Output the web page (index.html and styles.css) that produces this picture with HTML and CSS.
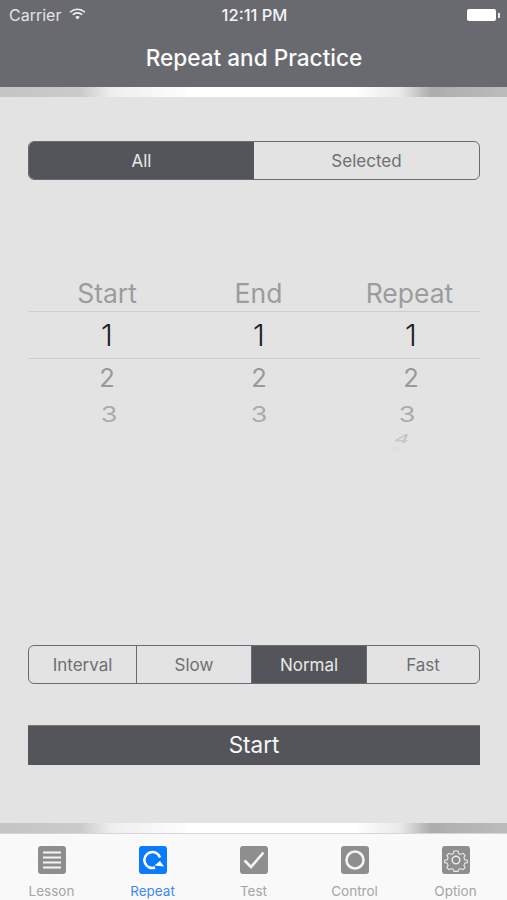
FILE: index.html
```html
<!DOCTYPE html>
<html lang="en">
<head>
<meta charset="utf-8">
<title>Repeat and Practice</title>
<link rel="stylesheet" href="styles.css">
</head>
<body>
<div class="app">
  <header class="header">
    <div class="status">
      <div class="status-left">
        <span>Carrier</span>
        <svg class="wifi" viewBox="0 0 18 13" width="17" height="12"><path d="M1 4.6C5.6.4 12.4.4 17 4.6" fill="none" stroke="#f2f2f2" stroke-width="1.7"/><path d="M3.8 7.3c3-2.7 7.4-2.7 10.4 0" fill="none" stroke="#f2f2f2" stroke-width="1.7"/><path d="M6.5 9.7c1.5-1.2 3.5-1.2 5 0L9 12.4z" fill="#f2f2f2"/></svg>
      </div>
      <span class="clock">12:11 PM</span>
      <div class="battery"><span class="battery-body"></span><span class="battery-tip"></span></div>
    </div>
    <h1 class="title">Repeat and Practice</h1>
  </header>
  <div class="band"></div>
  <main class="main">
    <div class="segment top-seg">
      <span class="seg on">All</span>
      <span class="seg">Selected</span>
    </div>
    <section class="picker">
      <div class="row heads"><span>Start</span><span>End</span><span>Repeat</span></div>
      <div class="row sel"><span>1</span><span>1</span><span>1</span></div>
      <div class="row two"><span>2</span><span>2</span><span>2</span></div>
      <div class="row three"><span class="t-a">3</span><span>3</span><span class="t-c">3</span></div>
      <div class="row four"><span></span><span></span><span class="f">4</span></div>
      <div class="row five"><span></span><span></span><span class="v">5</span></div>
    </section>
    <div class="segment speed">
      <span class="seg s1">Interval</span>
      <span class="seg s2">Slow</span>
      <span class="seg s3 on">Normal</span>
      <span class="seg s4">Fast</span>
    </div>
    <button class="start" type="button">Start</button>
  </main>
  <div class="band band-bottom"></div>
  <nav class="tabs">
    <div class="tab">
      <svg class="icon" viewBox="0 0 28 28"><rect width="28" height="28" rx="3" fill="#8e8e8e"/><path d="M5 6.500h18M5 11.500h18M5 16.500h18M5 21.500h18" stroke="#f4f4f4" stroke-width="2.200"/></svg>
      <span>Lesson</span>
    </div>
    <div class="tab active">
      <svg class="icon" viewBox="0 0 28 28"><rect width="28" height="28" rx="3" fill="#0a7aff"/><path d="M21 11.500A8 8 0 1 0 16 21.600" fill="none" stroke="#fff" stroke-width="2.600"/><path d="M15.500 19.500l5.500-4.500 4 5.500z" fill="#fff"/></svg>
      <span>Repeat</span>
    </div>
    <div class="tab">
      <svg class="icon" viewBox="0 0 28 28"><rect width="28" height="28" rx="3" fill="#8e8e8e"/><path d="M4.500 14.500l6.500 6.500L23.500 6.500" fill="none" stroke="#f6f6f6" stroke-width="2.600"/></svg>
      <span>Test</span>
    </div>
    <div class="tab">
      <svg class="icon" viewBox="0 0 28 28"><rect width="28" height="28" rx="3" fill="#8e8e8e"/><circle cx="14" cy="14" r="8.500" fill="none" stroke="#f4f4f4" stroke-width="2.600"/></svg>
      <span>Control</span>
    </div>
    <div class="tab">
      <svg class="icon" viewBox="0 0 28 28"><rect width="28" height="28" rx="3" fill="#8e8e8e"/><path d="M12 5h4l.7 2.600 2.100.9 2.300-1.200 2 2-1.200 2.300.9 2.100 2.600.7v2.200l-2.600.7-.9 2.100 1.200 2.300-2 2-2.300-1.200-2.100.9-.7 2h-4l-.7-2-2.100-.9-2.300 1.200-2-2 1.200-2.300-.9-2.100-2.600-.7v-2.200l2.600-.7.9-2.100-1.200-2.300 2-2 2.300 1.200 2.100-.9z" fill="none" stroke="#ececec" stroke-width="1.100"/><circle cx="14" cy="14" r="3.800" fill="none" stroke="#ececec" stroke-width="1.400"/></svg>
      <span>Option</span>
    </div>
  </nav>
</div>
</body>
</html>
```
FILE: styles.css
```css
* { box-sizing: border-box; }
html, body { margin: 0; padding: 0; }
body { font-family: Inter, "Liberation Sans", sans-serif; background: #e3e3e3; }
.app { width: 507px; height: 900px; display: flex; flex-direction: column; overflow: hidden; }

.header { height: 87px; background: #686a70; color: #f5f5f5; flex: none; }
.status { height: 30px; padding: 0 7px 0 9px; display: flex; align-items: center; justify-content: space-between; position: relative; font-size: 16px; }
.status-left { display: flex; align-items: center; gap: 8px; color: #e4e4e6; }
.wifi { margin-top: -3px; }
.clock { position: absolute; left: 2px; right: 0; text-align: center; font-weight: 500; font-size: 16.5px; }
.battery { display: flex; align-items: center; }
.battery-body { width: 29px; height: 12px; background: #fff; border-radius: 2px; }
.battery-tip { width: 2px; height: 5px; background: #e8e8e8; margin-left: 2px; }
.title { margin: 0; padding: 13px 0 0 1px; text-align: center; font-size: 22.6px; line-height: 30px; font-weight: 500; color: #fbfbfb; }

.band { height: 10px; flex: none; background: linear-gradient(90deg, #c4c4c4 0, #cbcbcb 16%, #eeeeee 22%, #ffffff 38%, #ffffff 70%, #e9e9e9 79%, #adadad 85%, #bcbcbc 100%); }
.band-bottom { height: 11px; border-bottom: 1px solid #d6d6d6; }

.main { flex: 1; padding: 44px 27px 0 28px; display: flex; flex-direction: column; }

.segment { display: flex; border: 1.5px solid #6a6b70; border-radius: 6px; overflow: hidden; color: #6e6f73; font-size: 17px; }
.top-seg { height: 39px; }
.top-seg .seg { flex: 1; }
.seg { display: flex; align-items: center; justify-content: center; }
.seg.on { background: #54555a; color: #e8e8e8; }

.picker { margin-top: 93px; height: 191px; }
.row { display: grid; grid-template-columns: repeat(3, 152px); padding-left: 3px; margin-right: -8px; text-align: center; }
.heads { height: 38px; font-size: 26.5px; line-height: 27px; color: #9c9c9c; padding-top: 7px; grid-template-columns: 152px 151px 151px; }
.sel { width: 452px; margin-right: 0; height: 48px; border-top: 1px solid #cfcfcf; border-bottom: 1px solid #cfcfcf; font-size: 30px; line-height: 47px; color: #1e1e1e; font-weight: 300; }
.two { height: 37px; font-size: 25.5px; line-height: 38px; color: #9a9a9a; }
.three { height: 35px; font-size: 27px; line-height: 38px; color: #ababab; }
.three span { display: block; transform: scaleY(.8); }
.three .t-a { transform: translateX(2px) scaleY(.8); }
.three .t-c { transform: translateX(-4px) scaleY(.8); }
.four { height: 14px; font-size: 24px; line-height: 16px; color: #c4c4c4; }
.four .f { display: block; transform: translateX(-9px) scaleY(.5) skewX(-12deg); }
.five { height: 8px; font-size: 18px; line-height: 8px; color: #dadada; overflow: hidden; }
.five .v { display: block; transform: translateX(-16px) scaleY(.3); }

.speed { height: 39px; margin-top: 181px; }
.speed .seg { border-right: 1.5px solid #6a6b70; }
.speed .seg:last-child { border-right: 0; }
.s1 { width: 108px; }
.s2 { width: 115px; }
.s3 { width: 115px; }
.s4 { flex: 1; }

.start { margin-top: 41px; height: 40px; border: 0; border-top: 1px solid #77787c; background: #54555a; color: #f7f7f7; padding: 0 0 2px; font: 400 22.5px Inter, "Liberation Sans", sans-serif; }

.tabs { height: 66px; flex: none; background: #f9f9f9; display: grid; grid-template-columns: 1fr 1fr 1fr 1fr 1fr; padding: 12px 1px 0; }
.tab { display: flex; flex-direction: column; align-items: center; color: #a5a5a5; font-size: 13.5px; line-height: 16px; gap: 9px; }
.tab.active { color: #3d8bf0; }
.icon { width: 28px; height: 28px; display: block; }
```
